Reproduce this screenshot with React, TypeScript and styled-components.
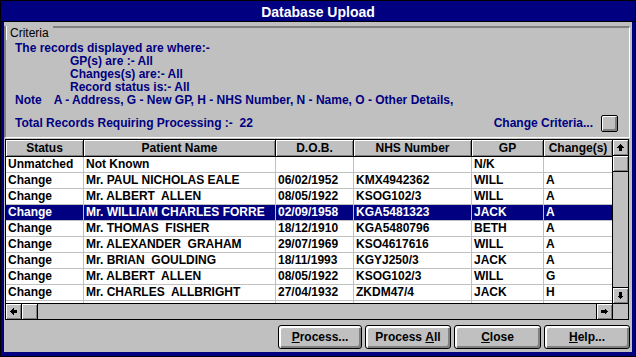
import React from "react";
import styled, { createGlobalStyle } from "styled-components";

const GlobalStyle = createGlobalStyle`
  html, body {
    margin: 0;
    padding: 0;
    background: #c0c0c0;
  }
  body {
    font-family: "Liberation Sans", Arial, sans-serif;
  }
`;

const NAVY = "#000080";
const FACE = "#c0c0c0";
const SHADOW = "#808080";

const Window = styled.div`
  width: 636px;
  height: 357px;
  box-sizing: border-box;
  border: 1px solid #000;
  background: ${NAVY};
  display: flex;
  flex-direction: column;
  overflow: hidden;
`;

const TitleBar = styled.div`
  height: 21px;
  border-bottom: 1px solid #000;
  display: flex;
  align-items: center;
  justify-content: center;
  color: #fff;
  font: bold 14px "Liberation Sans", Arial, sans-serif;
  padding-top: 1px;
  box-sizing: border-box;
`;

const Frame = styled.div`
  flex: 1;
  display: flex;
  padding: 0 3px 4px 3px;
`;

const Body = styled.div`
  flex: 1;
  background: ${FACE};
  display: flex;
  flex-direction: column;
  padding-top: 4px;
`;

const GroupBox = styled.div`
  position: relative;
  margin-right: 2px;
  border-top: 2px solid ${SHADOW};
  border-left: 2px solid ${SHADOW};
  border-right: 1px solid #fff;
  border-bottom: 1px solid #fff;
  padding: 14px 11px 5px 9px;
  color: ${NAVY};
  font: bold 12px "Liberation Sans", Arial, sans-serif;
`;

const Legend = styled.div`
  position: absolute;
  top: -2px;
  left: 0;
  height: 14px;
  padding: 0 4px 0 3px;
  background: ${FACE};
  border-left: 1px solid #fff;
  color: #000;
  font: 12px "Liberation Sans", Arial, sans-serif;
  line-height: 14px;
`;

const Line = styled.div<{ $indent?: boolean }>`
  height: 13px;
  line-height: 13px;
  white-space: pre;
  margin-left: ${(p) => (p.$indent ? "55px" : "0")};
`;

const NoteGap = styled.span`
  margin-left: 12px;
`;

const TotalRow = styled.div`
  margin-top: 7px;
  height: 18px;
  display: flex;
  align-items: center;
  white-space: pre;
`;

const Spacer = styled.div`
  flex: 1;
`;

const SmallButton = styled.div`
  width: 17px;
  height: 17px;
  margin-left: 8px;
  box-sizing: border-box;
  border: 1px solid #000;
  border-radius: 2px;
  background: ${FACE};
  box-shadow: inset 1px 1px #fff, inset -2px -2px ${SHADOW};
`;

const Grid = styled.div`
  margin: 1px 3px 0 1px;
  border: 1px solid #000;
  background: #fff;
  display: grid;
  grid-template-columns: 606px 16px;
  grid-template-rows: 163px 16px;
  font: bold 12px "Liberation Sans", Arial, sans-serif;
  color: #000;
`;

const TableArea = styled.div`
  overflow: hidden;
  display: flex;
  flex-direction: column;
`;

const HeaderRow = styled.div`
  display: flex;
  height: 17px;
  box-sizing: border-box;
  border-bottom: 1px solid #000;
  background: ${FACE};
  flex-shrink: 0;
`;

const HeaderCell = styled.div<{ $w: number; $last?: boolean }>`
  width: ${(p) => p.$w}px;
  box-sizing: border-box;
  border-right: ${(p) => (p.$last ? "none" : "1px solid #000")};
  box-shadow: inset 1px 1px #fff, inset -1px -1px ${SHADOW};
  text-align: center;
  line-height: 16px;
  white-space: nowrap;
  overflow: hidden;
`;

const Row = styled.div<{ $selected?: boolean }>`
  display: flex;
  height: 16px;
  flex-shrink: 0;
  box-sizing: border-box;
  border-bottom: 1px solid ${FACE};
  background: ${(p) => (p.$selected ? NAVY : "#fff")};
  color: ${(p) => (p.$selected ? "#fff" : "#000")};
`;

const Cell = styled.div<{ $w: number; $last?: boolean }>`
  width: ${(p) => p.$w}px;
  box-sizing: border-box;
  border-right: ${(p) => (p.$last ? "none" : `1px solid ${FACE}`)};
  padding-left: 2px;
  line-height: 15px;
  white-space: pre;
  overflow: hidden;
`;

const VScroll = styled.div`
  border-left: 1px solid #000;
  background: ${FACE};
  display: flex;
  flex-direction: column;
`;

const HScroll = styled.div`
  border-top: 1px solid #000;
  background: ${FACE};
  display: flex;
`;

const Corner = styled.div`
  border-left: 1px solid #000;
  border-top: 1px solid #000;
  background: ${FACE};
`;

const ScrollBtn = styled.div<{ $vertical?: boolean; $end?: boolean }>`
  width: 15px;
  height: 15px;
  flex-shrink: 0;
  background: ${FACE};
  box-shadow: inset 1px 1px #fff, inset -1px -1px ${SHADOW};
  display: flex;
  align-items: center;
  justify-content: center;
  ${(p) =>
    p.$vertical
      ? p.$end
        ? "border-top: 1px solid #000;"
        : "border-bottom: 1px solid #000;"
      : p.$end
      ? "border-left: 1px solid #000;"
      : "border-right: 1px solid #000;"}
`;

const Thumb = styled.div<{ $vertical?: boolean }>`
  width: 15px;
  height: 15px;
  flex-shrink: 0;
  background: ${FACE};
  box-shadow: inset 1px 1px #fff, inset -1px -1px ${SHADOW};
  ${(p) => (p.$vertical ? "border-bottom: 1px solid #000;" : "border-right: 1px solid #000;")}
`;

const Track = styled.div`
  flex: 1;
`;

const ButtonBar = styled.div`
  display: flex;
  justify-content: flex-end;
  gap: 3px;
  margin-top: 5px;
  padding-right: 2px;
`;

const PushButton = styled.div<{ $w: number }>`
  width: ${(p) => p.$w}px;
  height: 24px;
  box-sizing: border-box;
  border: 1px solid #000;
  border-radius: 3px;
  background: ${FACE};
  box-shadow: inset 2px 2px #fff, inset -2px -2px ${SHADOW};
  display: flex;
  align-items: center;
  justify-content: center;
  font: bold 12px "Liberation Sans", Arial, sans-serif;
  color: #000;
  white-space: pre;
`;

const Key = styled.span`
  text-decoration: underline;
`;

const Arrow = ({ rotate }: { rotate: number }) => (
  <svg width="7" height="7" viewBox="0 0 7 7" style={{ transform: `rotate(${rotate}deg)` }} shapeRendering="crispEdges">
    <path d="M3.5 0 L7 3.5 H5 V7 H2 V3.5 H0 Z" fill="#000" />
  </svg>
);

const columns = [
  { title: "Status", w: 78 },
  { title: "Patient Name", w: 192 },
  { title: "D.O.B.", w: 78 },
  { title: "NHS Number", w: 118 },
  { title: "GP", w: 72 },
  { title: "Change(s)", w: 68 },
];

const rows: string[][] = [
  ["Unmatched", "Not Known", "", "", "N/K", ""],
  ["Change", "Mr. PAUL NICHOLAS EALE", "06/02/1952", "KMX4942362", "WILL", "A"],
  ["Change", "Mr. ALBERT  ALLEN", "08/05/1922", "KSOG102/3", "WILL", "A"],
  ["Change", "Mr. WILLIAM CHARLES FORRE", "02/09/1958", "KGA5481323", "JACK", "A"],
  ["Change", "Mr. THOMAS  FISHER", "18/12/1910", "KGA5480796", "BETH", "A"],
  ["Change", "Mr. ALEXANDER  GRAHAM", "29/07/1969", "KSO4617616", "WILL", "A"],
  ["Change", "Mr. BRIAN  GOULDING", "18/11/1993", "KGYJ250/3", "JACK", "A"],
  ["Change", "Mr. ALBERT  ALLEN", "08/05/1922", "KSOG102/3", "WILL", "G"],
  ["Change", "Mr. CHARLES  ALLBRIGHT", "27/04/1932", "ZKDM47/4", "JACK", "H"],
  ["", "", "", "", "", ""],
];

const SELECTED = 3;

export default function App() {
  return (
    <>
      <GlobalStyle />
      <Window>
        <TitleBar>Database Upload</TitleBar>
        <Frame>
          <Body>
            <GroupBox>
              <Legend>Criteria</Legend>
              <Line>The records displayed are where:-</Line>
              <Line $indent>GP(s) are :- All</Line>
              <Line $indent>Changes(s) are:- All</Line>
              <Line $indent>Record status is:- All</Line>
              <Line>
                Note<NoteGap>A - Address, G - New GP, H - NHS Number, N - Name, O - Other Details,</NoteGap>
              </Line>
              <TotalRow>
                <span>Total Records Requiring Processing :-  22</span>
                <Spacer />
                <span>Change Criteria...</span>
                <SmallButton />
              </TotalRow>
            </GroupBox>

            <Grid>
              <TableArea>
                <HeaderRow>
                  {columns.map((c, i) => (
                    <HeaderCell key={c.title} $w={c.w} $last={i === columns.length - 1}>
                      {c.title}
                    </HeaderCell>
                  ))}
                </HeaderRow>
                {rows.map((r, ri) => (
                  <Row key={ri} $selected={ri === SELECTED}>
                    {r.map((v, ci) => (
                      <Cell key={ci} $w={columns[ci].w} $last={ci === columns.length - 1}>
                        {v}
                      </Cell>
                    ))}
                  </Row>
                ))}
              </TableArea>
              <VScroll>
                <ScrollBtn $vertical>
                  <Arrow rotate={0} />
                </ScrollBtn>
                <Thumb $vertical />
                <Track />
                <ScrollBtn $vertical $end>
                  <Arrow rotate={180} />
                </ScrollBtn>
              </VScroll>
              <HScroll>
                <ScrollBtn>
                  <Arrow rotate={-90} />
                </ScrollBtn>
                <Thumb />
                <Track />
                <ScrollBtn $end>
                  <Arrow rotate={90} />
                </ScrollBtn>
              </HScroll>
              <Corner />
            </Grid>

            <ButtonBar>
              <PushButton $w={84}>
                <Key>P</Key>rocess...
              </PushButton>
              <PushButton $w={86}>
                Process <Key>A</Key>ll
              </PushButton>
              <PushButton $w={87}>
                <Key>C</Key>lose
              </PushButton>
              <PushButton $w={86}>
                <Key>H</Key>elp...
              </PushButton>
            </ButtonBar>
          </Body>
        </Frame>
      </Window>
    </>
  );
}
